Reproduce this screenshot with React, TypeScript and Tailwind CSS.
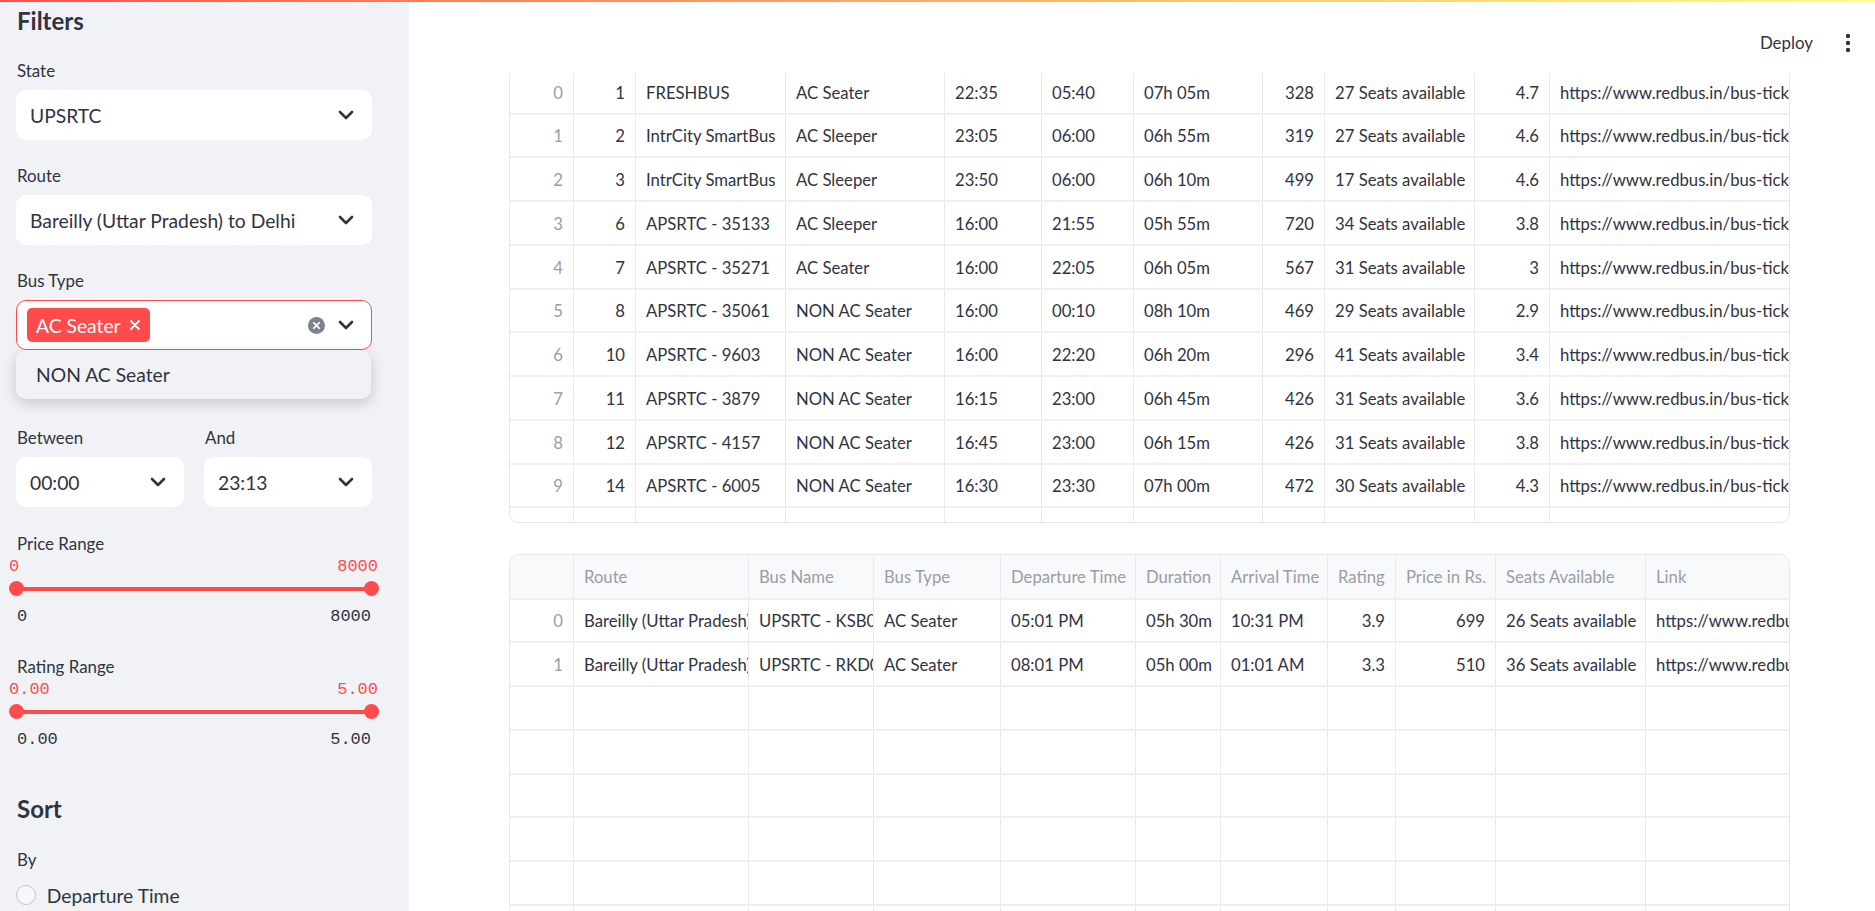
import React from "react";
import { ChevronDown } from "lucide-react";

const t1Grid =
  "grid grid-cols-[64px_62px_150px_159px_97px_92px_129px_62px_150px_75px_700px]";
const t2Grid =
  "grid grid-cols-[64px_175px_125px_127px_135px_85px_107px_68px_100px_150px_700px]";

const link = "https://www.redbus.in/bus-tickets/bareilly-to-delhi?fromCityId=1234";

const t1Rows: string[][] = [
  ["0", "1", "FRESHBUS", "AC Seater", "22:35", "05:40", "07h 05m", "328", "27 Seats available", "4.7"],
  ["1", "2", "IntrCity SmartBus", "AC Sleeper", "23:05", "06:00", "06h 55m", "319", "27 Seats available", "4.6"],
  ["2", "3", "IntrCity SmartBus", "AC Sleeper", "23:50", "06:00", "06h 10m", "499", "17 Seats available", "4.6"],
  ["3", "6", "APSRTC - 35133", "AC Sleeper", "16:00", "21:55", "05h 55m", "720", "34 Seats available", "3.8"],
  ["4", "7", "APSRTC - 35271", "AC Seater", "16:00", "22:05", "06h 05m", "567", "31 Seats available", "3"],
  ["5", "8", "APSRTC - 35061", "NON AC Seater", "16:00", "00:10", "08h 10m", "469", "29 Seats available", "2.9"],
  ["6", "10", "APSRTC - 9603", "NON AC Seater", "16:00", "22:20", "06h 20m", "296", "41 Seats available", "3.4"],
  ["7", "11", "APSRTC - 3879", "NON AC Seater", "16:15", "23:00", "06h 45m", "426", "31 Seats available", "3.6"],
  ["8", "12", "APSRTC - 4157", "NON AC Seater", "16:45", "23:00", "06h 15m", "426", "31 Seats available", "3.8"],
  ["9", "14", "APSRTC - 6005", "NON AC Seater", "16:30", "23:30", "07h 00m", "472", "30 Seats available", "4.3"],
  ["10", "15", "APSRTC - 6113", "NON AC Seater", "16:30", "23:40", "07h 10m", "472", "30 Seats available", "4.1"],
];
const t1Right = [true, true, false, false, false, false, false, true, false, true, false];

const t2Head = ["", "Route", "Bus Name", "Bus Type", "Departure Time", "Duration", "Arrival Time", "Rating", "Price in Rs.", "Seats Available", "Link"];
const t2Rows: string[][] = [
  ["0", "Bareilly (Uttar Pradesh) to Delhi", "UPSRTC - KSB00(Kaushambi)", "AC Seater", "05:01 PM", "05h 30m", "10:31 PM", "3.9", "699", "26 Seats available", link],
  ["1", "Bareilly (Uttar Pradesh) to Delhi", "UPSRTC - RKD01:Ramnagar", "AC Seater", "08:01 PM", "05h 00m", "01:01 AM", "3.3", "510", "36 Seats available", link],
];
const t2Right = [true, false, false, false, false, false, false, true, true, false, false];

function Chevron() {
  return <ChevronDown size={24} strokeWidth={2.6} color="#31333f" className="shrink-0" />;
}

function Label({ children, className }: { children: React.ReactNode; className: string }) {
  return <div className={"h-[28px] flex items-center pl-[1px] pt-[2px] text-[16.9px] " + className}>{children}</div>;
}

function Select({ children, className }: { children: React.ReactNode; className: string }) {
  return (
    <div className={"h-[50px] rounded-[10px] bg-white flex items-center justify-between pl-[14px] pr-[14px] text-[19.3px] " + className}>
      <span className="whitespace-nowrap pt-[2px]">{children}</span>
      <Chevron />
    </div>
  );
}

function RangeSlider({ lo, hi }: { lo: string; hi: string }) {
  return (
    <>
      <div className="h-[21px] -ml-[7px] -mr-[6px] flex items-center justify-between font-['Liberation_Mono',monospace] text-[17px] text-[#ff4b4b]">
        <span>{lo}</span>
        <span>{hi}</span>
      </div>
      <div className="h-[22px] flex items-center pr-[1px]">
        <div className="relative h-[4px] w-full rounded-full bg-[#ff4b4b]">
          <span className="absolute left-[-7.5px] top-[-5.5px] w-[15px] h-[15px] rounded-full bg-[#ff4b4b]" />
          <span className="absolute right-[-7.5px] top-[-5.5px] w-[15px] h-[15px] rounded-full bg-[#ff4b4b]" />
        </div>
      </div>
    </>
  );
}

function MinMax({ lo, hi, className }: { lo: string; hi: string; className: string }) {
  return (
    <div className={"h-[21.5px] flex items-center justify-between px-[1px] font-['Liberation_Mono',monospace] text-[17px] text-[#31333f] " + className}>
      <span>{lo}</span>
      <span>{hi}</span>
    </div>
  );
}

function Sidebar() {
  return (
    <aside className="w-[409px] shrink-0 h-full bg-[#f0f2f6] pl-[16px] pr-[37px] flex flex-col text-[#31333f]">
      <div className="h-[41px] flex items-center pl-[1px] pt-[1px] text-[24px] font-bold">Filters</div>
      <Label className="mt-[15px]">State</Label>
      <Select className="mt-[6px]">UPSRTC</Select>
      <Label className="mt-[21px]">Route</Label>
      <Select className="mt-[6px]">Bareilly (Uttar Pradesh) to Delhi</Select>
      <Label className="mt-[21px]">Bus Type</Label>
      <div className="relative mt-[6px] h-[50px] rounded-[10px] bg-white border border-[#ff4b4b] flex items-center pl-[10px] pr-[13px]">
        <div className="h-[34px] rounded-[5px] bg-[#ff4b4b] text-white flex items-center pl-[9px] pr-[10px] gap-[9px] text-[19.3px]">
          <span className="whitespace-nowrap pt-[2px]">AC Seater</span>
          <svg width="10" height="10" viewBox="0 0 10 10">
            <path d="M1 1 9 9M9 1 1 9" stroke="white" strokeWidth="1.9" strokeLinecap="round" />
          </svg>
        </div>
        <div className="ml-auto flex items-center gap-[9px]">
          <svg width="17" height="17" viewBox="0 0 17 17">
            <circle cx="8.5" cy="8.5" r="8.5" fill="#7e8190" />
            <path d="M5.8 5.8 11.2 11.2M11.2 5.8 5.8 11.2" stroke="white" strokeWidth="1.8" strokeLinecap="round" />
          </svg>
          <Chevron />
        </div>
        <div className="absolute left-[-1px] top-[49px] z-10 w-[355px] h-[49px] rounded-[10px] bg-[#f0f2f6] shadow-[0_4px_14px_rgba(0,0,0,0.18)] flex items-center pl-[20px] pt-[2px] text-[19.3px]">
          NON AC Seater
        </div>
      </div>
      <div className="mt-[73px] grid grid-cols-2 gap-x-[20px]">
        <div className="flex flex-col">
          <Label className="">Between</Label>
          <Select className="mt-[6px]">00:00</Select>
        </div>
        <div className="flex flex-col">
          <Label className="">And</Label>
          <Select className="mt-[6px]">23:13</Select>
        </div>
      </div>
      <Label className="mt-[21.5px]">Price Range</Label>
      <RangeSlider lo="0" hi="8000" />
      <MinMax lo="0" hi="8000" className="mt-[6.5px]" />
      <Label className="mt-[24px]">Rating Range</Label>
      <RangeSlider lo="0.00" hi="5.00" />
      <MinMax lo="0.00" hi="5.00" className="mt-[6px]" />
      <div className="mt-[38px] h-[42px] flex items-center pl-[1px] text-[24px] font-bold">Sort</div>
      <Label className="mt-[14.3px]">By</Label>
      <div className="mt-[7.7px] h-[30px] flex items-center gap-[10.7px] text-[19.3px]">
        <span className="w-[20px] h-[20px] rounded-full border border-[#c3c6ce] bg-[#f7f8fa] shrink-0" />
        <span className="pt-[3px]">Departure Time</span>
      </div>
    </aside>
  );
}

function Cells({ row, right, head }: { row: string[]; right: boolean[]; head?: boolean }) {
  return (
    <>
      {row.map((v, i) => (
        <div
          key={i}
          className={
            "flex items-center px-[10px] pt-[3px] overflow-hidden whitespace-nowrap border-r border-[#e9e9ed] " +
            (right[i] && !head ? "justify-end " : "justify-start ") +
            (i === 0 || head ? "text-[#9a9da6]" : "text-[#31333f]")
          }
        >
          {v}
        </div>
      ))}
    </>
  );
}

function Main() {
  return (
    <main className="relative flex-1 h-full overflow-hidden bg-white">
      <div className="absolute top-0 left-0 right-0 h-[73px] bg-white z-10 flex items-center justify-end pt-[13px] pr-[20px] gap-[28px] text-[16.9px] text-[#31333f]">
        <span>Deploy</span>
        <svg width="14" height="20" viewBox="0 0 14 20">
          <circle cx="7" cy="3" r="2.2" fill="#31333f" />
          <circle cx="7" cy="10" r="2.2" fill="#31333f" />
          <circle cx="7" cy="17" r="2.2" fill="#31333f" />
        </svg>
      </div>
      <div className="pt-[26px] pl-[100px] flex flex-col">
        <div className="w-[1281px] h-[497px] border border-[#e6e7eb] rounded-[10px] overflow-hidden text-[16.7px]">
          <div className={t1Grid + " h-[43.75px] border-b-2 border-[#efeff2] bg-[#f8f9fb]"}>
            <Cells head row={["", "", "Bus Name", "Bus Type", "Departure", "Arrival", "Duration", "Price", "Seats", "Rating", "Link"]} right={t1Right} />
          </div>
          {t1Rows.map((r, i) => (
            <div key={i} className={t1Grid + " h-[43.75px] border-b-2 border-[#efeff2]"}>
              <Cells row={[...r, link]} right={t1Right} />
            </div>
          ))}
        </div>
        <div className="mt-[31px] w-[1281px] h-[400px] border border-[#e6e7eb] rounded-t-[10px] overflow-hidden text-[16.7px]">
          <div className={t2Grid + " h-[44.5px] border-b-2 border-[#efeff2] bg-[#f8f9fb]"}>
            <Cells head row={t2Head} right={t2Right} />
          </div>
          {t2Rows.map((r, i) => (
            <div key={i} className={t2Grid + " h-[43.75px] border-b-2 border-[#efeff2]"}>
              <Cells row={r} right={t2Right} />
            </div>
          ))}
          {[0, 1, 2, 3, 4, 5, 6].map((i) => (
            <div key={"e" + i} className={t2Grid + " h-[43.75px] border-b-2 border-[#efeff2]"}>
              <Cells row={["", "", "", "", "", "", "", "", "", "", ""]} right={t2Right} />
            </div>
          ))}
        </div>
      </div>
    </main>
  );
}

export default function App() {
  return (
    <div className="relative flex w-[1875px] h-[911px] overflow-hidden bg-white font-[Lato,sans-serif] text-[#31333f]">
      <div className="absolute top-0 left-0 right-0 h-[2px] z-20 bg-linear-to-r from-[#ff4b4b] to-[#fffd80]" />
      <Sidebar />
      <Main />
    </div>
  );
}
